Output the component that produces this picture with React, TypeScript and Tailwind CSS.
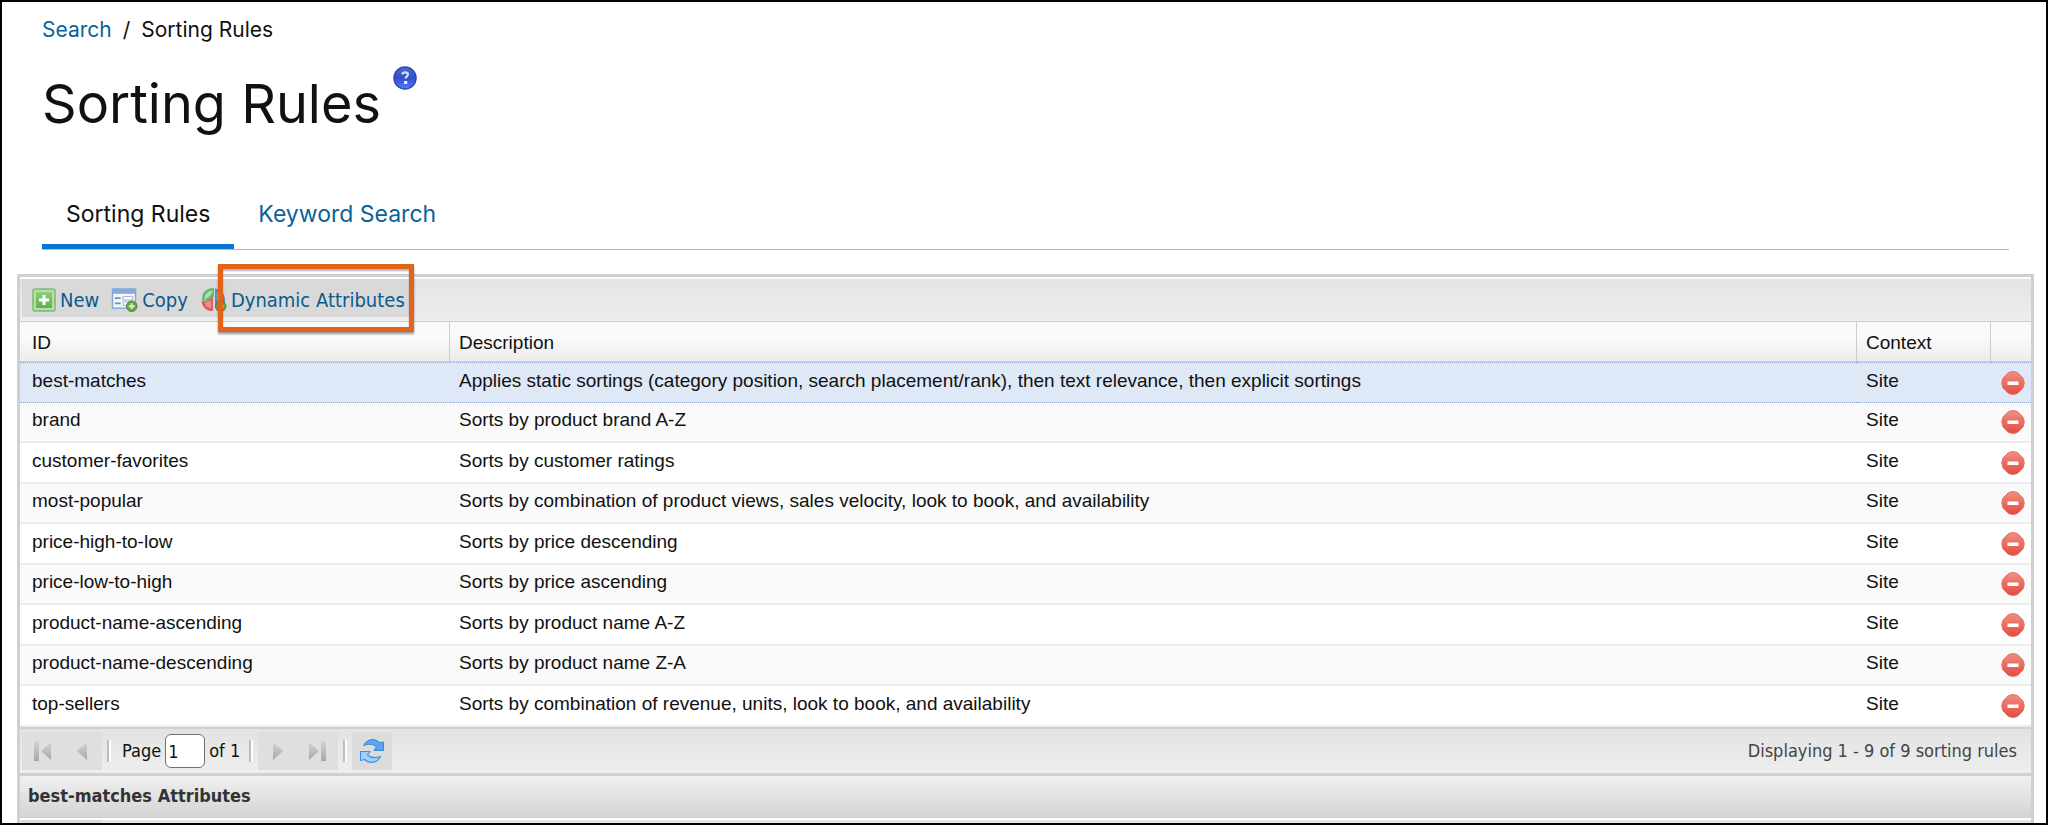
import { useState } from "react";
import type { ReactNode } from "react";

const rules = [
  { id: "best-matches", description: "Applies static sortings (category position, search placement/rank), then text relevance, then explicit sortings", context: "Site" },
  { id: "brand", description: "Sorts by product brand A-Z", context: "Site" },
  { id: "customer-favorites", description: "Sorts by customer ratings", context: "Site" },
  { id: "most-popular", description: "Sorts by combination of product views, sales velocity, look to book, and availability", context: "Site" },
  { id: "price-high-to-low", description: "Sorts by price descending", context: "Site" },
  { id: "price-low-to-high", description: "Sorts by price ascending", context: "Site" },
  { id: "product-name-ascending", description: "Sorts by product name A-Z", context: "Site" },
  { id: "product-name-descending", description: "Sorts by product name Z-A", context: "Site" },
  { id: "top-sellers", description: "Sorts by combination of revenue, units, look to book, and availability", context: "Site" },
];

function HelpIcon() {
  return (
    <svg viewBox="0 0 24 24" className="size-6" aria-hidden="true">
      <defs>
        <linearGradient id="help-fill" x1="0" y1="0" x2="0" y2="1">
          <stop offset="0" stopColor="#5068c8" />
          <stop offset="0.5" stopColor="#2f4fd0" />
          <stop offset="1" stopColor="#5a7df5" />
        </linearGradient>
      </defs>
      <circle cx="12" cy="12" r="11" fill="url(#help-fill)" stroke="#2f47b8" strokeWidth="1.5" />
      <path d="M9.2 8.4c.4-1.4 1.5-2 3-2 1.6 0 2.7.8 2.7 2.2 0 1.8-2.3 1.9-2.3 3.9" fill="none" stroke="#d5ddf8" strokeWidth="2.2" />
      <rect x="11.2" y="15" width="3" height="3" fill="#fff" />
    </svg>
  );
}

function NewIcon() {
  return (
    <svg viewBox="0 0 24 24" className="size-6" aria-hidden="true">
      <defs>
        <linearGradient id="new-fill" x1="0" y1="0" x2="0" y2="1">
          <stop offset="0" stopColor="#8fce80" />
          <stop offset="1" stopColor="#5cb34c" />
        </linearGradient>
      </defs>
      <rect x="1" y="1" width="22" height="22" rx="2" fill="#b5dda9" stroke="#7fb973" strokeWidth="1.5" />
      <rect x="4" y="4" width="16" height="16" fill="url(#new-fill)" />
      <path d="M12 7v10M7 12h10" stroke="#fff" strokeWidth="3" />
    </svg>
  );
}

function AddBadge() {
  return (
    <>
      <circle cx="21" cy="19" r="5.5" fill="#6aa544" stroke="#4a8530" strokeWidth="1" />
      <path d="M21 16v6M18 19h6" stroke="#d9f0c4" strokeWidth="2" />
    </>
  );
}

function CopyIcon() {
  return (
    <svg viewBox="0 0 27 25" className="h-6 w-[27px]" aria-hidden="true">
      <rect x="1" y="1" width="24" height="20" fill="#f3f6fb" stroke="#86a6d8" strokeWidth="1.5" />
      <rect x="1" y="1" width="24" height="5" fill="#86a9de" />
      <path d="M3.5 10.5h6M3.5 16h6" stroke="#7f8da3" strokeWidth="1.8" />
      <rect x="12" y="9" width="10" height="3.5" fill="#fff" stroke="#9fb2d0" strokeWidth="1" />
      <rect x="12" y="14.5" width="10" height="3.5" fill="#fff" stroke="#9fb2d0" strokeWidth="1" />
      <AddBadge />
    </svg>
  );
}

function ChartIcon() {
  return (
    <svg viewBox="0 0 27 25" className="h-6 w-[27px]" aria-hidden="true">
      <path d="M1.5 13C1 5 6 0 14 0v9l-5 4z" fill="#62bb6a" />
      <path d="M4 11C4.5 6 8 3 13 2.5L10 8l-5 4z" fill="#abdfae" />
      <path d="M1 14l7-1 5-3v14C6 24 2 20 1 14z" fill="#dd5a62" />
      <path d="M4 15l7-2v8c-4-.5-6-3-7-6z" fill="#ee8d90" />
      <path d="M15 .5c7 1 11 6 10.5 14L23 20h-8z" fill="#6389bd" />
      <path d="M17 4c4 1.5 6 4.5 6 9h-6z" fill="#9db9dd" />
      <AddBadge />
    </svg>
  );
}

function DeleteIcon() {
  return (
    <svg viewBox="0 0 24 24" className="size-6" aria-hidden="true">
      <defs>
        <linearGradient id="delete-fill" x1="0" y1="0" x2="0" y2="1">
          <stop offset="0" stopColor="#f08f82" />
          <stop offset="1" stopColor="#e5493f" />
        </linearGradient>
      </defs>
      <path d="M7.5 1.5Q12-.5 16.5 1.5L22 7Q24.5 12 22 17L16.5 22.5Q12 24.5 7.5 22.5L2 17Q-.5 12 2 7z" fill="url(#delete-fill)" stroke="#e0766c" strokeWidth="1" strokeLinejoin="round" />
      <rect x="6.5" y="10.5" width="11" height="3.5" fill="#fff" />
    </svg>
  );
}

function PageArrow({ flip = false, bar = false }: { flip?: boolean; bar?: boolean }) {
  return (
    <svg viewBox="0 0 24 24" className={flip ? "size-6 -scale-x-100" : "size-6"} aria-hidden="true">
      <defs>
        <linearGradient id="arrow-fill" x1="0" y1="0" x2="0" y2="1">
          <stop offset="0" stopColor="#d4d4d4" />
          <stop offset="1" stopColor="#a8a8a8" />
        </linearGradient>
      </defs>
      <path d={bar ? "M3 3L13 12 3 21z" : "M7 3L17 12 7 21z"} fill="url(#arrow-fill)" />
      {bar && <rect x="15" y="2" width="5" height="20" fill="url(#arrow-fill)" />}
    </svg>
  );
}

function RefreshIcon() {
  return (
    <svg viewBox="0 0 24 24" className="size-6" aria-hidden="true">
      <path d="M3.5 6.5C7-.5 15-1 19.5 3.5L23.5 3v8.5H14l2.5-3.5C12.5 4.5 8 5 3.5 6.5z" fill="#5ba4ee" stroke="#3a88e0" strokeWidth="1" strokeLinejoin="round" />
      <path d="M20.5 17.5C17 24.5 9 25 4.5 20.5L.5 21.5V12.5H10l-2.5 3.5C11.5 19.5 16 19 20.5 17.5z" fill="#a3d0fa" stroke="#3f90e6" strokeWidth="1.2" strokeLinejoin="round" />
    </svg>
  );
}

function ToolButton({ icon, label }: { icon: ReactNode; label: string }) {
  return (
    <button className="flex items-center gap-1 text-[#0a5a8c]">
      {icon}
      {label}
    </button>
  );
}

function Separator() {
  return <span className="mx-[5px] h-[22px] w-1 border-l-2 border-r-2 border-l-[#bdbdbd] border-r-white" />;
}

export default function App() {
  const [selected, setSelected] = useState("best-matches");
  const [page, setPage] = useState("1");

  return (
    <div className="h-screen overflow-hidden border-2 border-black bg-white text-[#111]">
      <header className="ml-10 mr-[37px] font-[Inter,sans-serif]">
        <nav aria-label="Breadcrumb" className="flex gap-[11px] pt-3 text-[21px] leading-8">
          <a href="#search" className="text-[#0a6299]">Search</a>
          <span>/</span>
          <span>Sorting Rules</span>
        </nav>

        <div className="mt-[18px] flex items-start gap-3">
          <h1 className="text-[54px] leading-20">Sorting Rules</h1>
          <button aria-label="Help" className="mt-0.5">
            <HelpIcon />
          </button>
        </div>

        <nav className="mt-[50px] flex border-b border-[#b8b8b8] text-[23px] leading-8">
          <a href="#sorting-rules" className="border-b-5 border-[#0a75d1] px-6 pt-1 pb-3.5">Sorting Rules</a>
          <a href="#keyword-search" className="px-6 pt-1 pb-3.5 text-[#0a6299]">Keyword Search</a>
        </nav>
      </header>

      <main className="mt-6 ml-[15px] mr-3 border-3 border-[#d0d0d0] font-['DejaVu_Sans_Condensed','DejaVu_Sans',sans-serif] text-lg">
        <div className="flex h-[45px] items-start border-t-2 border-b border-t-white border-b-[#cfcfcf] bg-linear-to-b from-[#e3e3e3] to-[#eeeeee] px-0.5">
          <div className="relative flex h-[38px] items-center gap-3 bg-[#d9d9d9] pt-1 pl-2.5 pr-2 text-xl">
            <ToolButton icon={<NewIcon />} label="New" />
            <ToolButton icon={<CopyIcon />} label="Copy" />
            <ToolButton icon={<ChartIcon />} label="Dynamic Attributes" />
            <span className="pointer-events-none absolute -top-[15px] -right-px h-[68px] w-[196px] border-5 border-[#e1641a] shadow-[0_2px_2px_rgba(0,0,0,0.4),inset_0_2px_2px_rgba(0,0,0,0.3)]" />
          </div>
        </div>

        <table className="w-full table-fixed border-separate border-spacing-0 text-left font-['Liberation_Sans',Arial,sans-serif] text-[19px] leading-7">
          <colgroup>
            <col className="w-[430px]" />
            <col />
            <col className="w-[134px]" />
            <col className="w-10" />
          </colgroup>
          <thead>
            <tr className="h-10 bg-linear-to-b from-[#fafafa] from-40% to-[#ebebeb]">
              <th className="border-r border-b border-[#cccccc] pt-0.5 pl-3 font-normal">ID</th>
              <th className="border-r border-b border-[#cccccc] pt-0.5 pl-[9px] font-normal">Description</th>
              <th className="border-r border-b border-[#cccccc] pt-0.5 pl-[9px] font-normal">Context</th>
              <th className="border-b border-[#cccccc]" aria-label="Delete" />
            </tr>
          </thead>
          <tbody>
            {rules.map((rule) => {
              const line = rule.id === selected
                ? "border-y border-dotted border-[#8fa8d6] bg-[#dfe8f6]"
                : "border-b-2 border-[#ededed]";
              return (
                <tr key={rule.id} onClick={() => setSelected(rule.id)} className="odd:h-[41px] even:h-10 even:bg-[#fafafa]">
                  <td className={`pb-1 pl-3 ${line}`}>{rule.id}</td>
                  <td className={`pb-1 pl-[9px] ${line}`}>{rule.description}</td>
                  <td className={`pb-1 pl-[9px] ${line}`}>{rule.context}</td>
                  <td className={`pl-2.5 ${line}`}>
                    <button aria-label={`Delete ${rule.id}`} className="block">
                      <DeleteIcon />
                    </button>
                  </td>
                </tr>
              );
            })}
          </tbody>
        </table>

        <div className="flex h-[46px] items-center border-t-2 border-[#d0d0d0] bg-linear-to-b from-[#e3e3e3] to-[#eeeeee] pl-0.5 pr-3.5">
          <div className="flex h-[38px] bg-[#dfdfdf]">
            <button aria-label="First page" className="px-2"><PageArrow flip bar /></button>
            <button aria-label="Previous page" className="px-2"><PageArrow flip /></button>
          </div>
          <Separator />
          <label htmlFor="page" className="pl-1.5 pr-1">Page</label>
          <input
            id="page"
            value={page}
            onChange={(e) => setPage(e.target.value)}
            className="h-[34px] w-10 rounded-md border border-[#707070] bg-white px-0.5"
          />
          <span className="px-1">of 1</span>
          <Separator />
          <div className="flex h-[38px] bg-[#dfdfdf]">
            <button aria-label="Next page" className="px-2"><PageArrow /></button>
            <button aria-label="Last page" className="px-2"><PageArrow bar /></button>
          </div>
          <Separator />
          <button aria-label="Refresh" className="h-[38px] bg-[#dcdcdc] px-2"><RefreshIcon /></button>
          <span className="ml-auto text-[#444]">Displaying 1 - 9 of 9 sorting rules</span>
        </div>

        <h2 className="h-[45px] border-t-3 border-b border-[#d0d0d0] bg-linear-to-b from-[#f0f0f0] to-[#d4d4d4] px-2 leading-10 font-bold text-[#333]">
          {selected} Attributes
        </h2>
        <div className="h-10 border-t-2 border-white bg-[#e6e6e6] px-0.5">
          <div className="h-full w-20 bg-[#d9d9d9]" />
        </div>
      </main>
    </div>
  );
}
